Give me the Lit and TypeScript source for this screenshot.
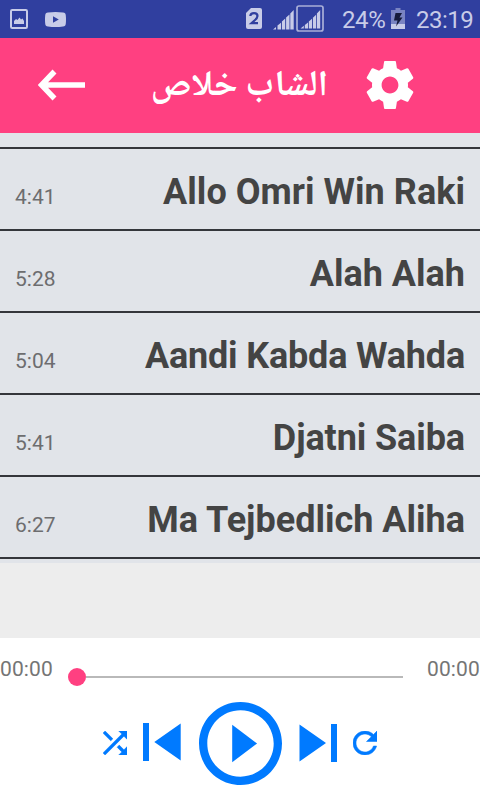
import { LitElement, html, css, svg } from "lit";
import { customElement, property } from "lit/decorators.js";
import { styleMap } from "lit/directives/style-map.js";

interface Track {
  title: string;
  time: string;
  tracking: number;
}

const TRACKS: Track[] = [
  { title: "Allo Omri Win Raki", time: "4:41", tracking: 0.03 },
  { title: "Alah Alah", time: "5:28", tracking: 0 },
  { title: "Aandi Kabda Wahda", time: "5:04", tracking: -0.18 },
  { title: "Djatni Saiba", time: "5:41", tracking: -0.1 },
  { title: "Ma Tejbedlich Aliha", time: "6:27", tracking: 0 },
];

const signalBars = svg`
  <path d="M0 20.5 L3 18 V20.5Z M4.5 16.5 L8 13.7 V20.5 H4.5Z M8.9 12.5 L12.2 9.5 V20.5 H8.9Z M13.1 8.5 L16.5 5.5 V20.5 H13.1Z M17.3 4.5 L20.7 1 V20.5 H17.3Z"/>`;

const smallSignalBars = svg`
  <path d="M0 20 L3.300 17.300 V20Z M4.300 16.500 L7.500 14 V20 H4.300Z M8.300 13 L11.500 10.200 V20 H8.300Z M12.400 9.200 L15.600 6.300 V20 H12.400Z M16.400 5 L19.700 1.500 V20 H16.400Z"/>`;

@customElement("status-bar")
class StatusBar extends LitElement {
  static styles = css`
    :host {
      display: flex;
      align-items: center;
      height: 38px;
      background: #303f9f;
      color: #c8cce8;
      font: 24px/38px Roboto, sans-serif;
    }
    svg { display: block; flex: none; fill: #c8cce8; }
    .picture { margin-left: 10px; }
    .video { margin-left: 17px; }
    .sim { margin-left: auto; margin-top: -1px; }
    .signal { margin-left: 11px; }
    .boxed { margin-left: 2px; margin-top: -1px; }
    .percent { margin-left: 18px; width: 43px; letter-spacing: -0.4px; }
    .battery { margin-left: 6px; margin-top: -1px; }
    .clock { margin-left: 11px; width: 64px; letter-spacing: -0.5px; }
    .percent, .clock { white-space: nowrap; padding-top: 2px; height: 36px; line-height: 36px; }
  `;

  render() {
    return html`
      <svg class="picture" width="18" height="20" viewBox="0 0 18 20">
        <rect x="1" y="1" width="16" height="18" rx="1.2" fill="none" stroke="#c8cce8" stroke-width="2" />
        <path d="M4 15V12L6 10l1.500 1L9.500 8.500l1.500 2 1.500-1 1.500 2.500V15Z" />
      </svg>
      <svg class="video" width="21" height="15" viewBox="0 0 21 15">
        <path fill-rule="evenodd" d="M3 .5Q10.500-.5 18 .5 20.700.700 20.800 3.500Q21.200 7.500 20.800 11.500 20.700 14.300 18 14.500 10.500 15.500 3 14.500.300 14.300.200 11.500-.200 7.500.200 3.500.300.700 3 .5ZM8 4.200V10.800L13.800 7.500Z" />
      </svg>
      <svg class="sim" width="16" height="21" viewBox="0 0 16 21">
        <path d="M5 0H14Q16 0 16 2V19Q16 21 14 21H2Q0 21 0 19V5Z" />
        <path d="M4.300 8Q4.500 5.200 8 5.200T11.500 8Q11.500 10 8.500 12.500L5.500 15.200H12" fill="none" stroke="#303f9f" stroke-width="2.200" />
      </svg>
      <svg class="signal" width="21" height="21" viewBox="0 0 21 21">${signalBars}</svg>
      <svg class="boxed" width="28" height="27" viewBox="0 0 28 27">
        <rect x="1" y="1" width="26" height="25" rx="2" fill="none" stroke="#a9afd8" stroke-width="1.700" />
        <g transform="translate(4.500 3.500)">${smallSignalBars}</g>
      </svg>
      <span class="percent">24%</span>
      <svg class="battery" width="14" height="21" viewBox="0 0 14 21">
        <path d="M4.500 0H9.500V2H14V16H0V2H4.500Z" fill="#7a84c2" />
        <path d="M0 16H14V21H0Z" />
        <path d="M4.500 5H11L8.500 9.500H11.500L5 18.500 6.500 12.500H3Z" fill="#151a3a" />
      </svg>
      <span class="clock">23:19</span>
    `;
  }
}

@customElement("title-bar")
class TitleBar extends LitElement {
  static styles = css`
    :host {
      display: flex;
      align-items: center;
      height: 95px;
      background: #ff4081;
      color: #fff;
    }
    svg { display: block; flex: none; }
    .back { margin: -1px 0 0 38px; }
    .gear { margin-top: -1px; }
    .name {
      margin: 0 38px 0 67px;
      padding-top: 4px;
      width: 176px;
      text-align: center;
      white-space: nowrap;
      font: bold 36px/48px "Noto Naskh Arabic", "Noto Sans Arabic", "DejaVu Sans", sans-serif;
    }
  `;

  render() {
    return html`
      <svg class="back" width="47" height="32" viewBox="0 0 47 32">
        <path d="M16.500 2.500L3.500 16 16.500 29.500M4 16H47" fill="none" stroke="#fff" stroke-width="5.500" />
      </svg>
      <span class="name" dir="rtl" lang="ar">الشاب خلاص</span>
      <svg class="gear" width="48" height="48" viewBox="2 2 20 20">
        <path fill="#fff" d="M19.430 12.980c.04-.32.07-.64.07-.98s-.03-.66-.07-.98l2.110-1.650c.19-.15.24-.42.12-.64l-2-3.460c-.12-.22-.39-.3-.61-.22l-2.490 1c-.52-.4-1.080-.73-1.690-.98l-.38-2.650C14.460 2.180 14.250 2 14 2h-4c-.25 0-.46.18-.49.42l-.38 2.650c-.61.25-1.170.59-1.690.98l-2.490-1c-.23-.09-.49 0-.61.22l-2 3.460c-.13.22-.07.49.12.64l2.110 1.650c-.04.32-.07.65-.07.98s.03.66.07.98l-2.110 1.650c-.19.15-.24.42-.12.64l2 3.460c.12.22.39.3.61.22l2.490-1c.52.4 1.080.73 1.690.98l.38 2.650c.03.24.24.42.49.42h4c.25 0 .46-.18.49-.42l.38-2.650c.61-.25 1.170-.59 1.690-.98l2.490 1c.23.09.49 0 .61-.22l2-3.460c.12-.22.07-.49-.12-.64l-2.110-1.650zM12 15.500c-1.930 0-3.500-1.570-3.500-3.500s1.570-3.500 3.500-3.500 3.500 1.570 3.500 3.500-1.570 3.500-3.500 3.500z" />
      </svg>
    `;
  }
}

@customElement("track-list")
class TrackList extends LitElement {
  @property({ attribute: false }) tracks: Track[] = [];

  static styles = css`
    :host {
      display: block;
      box-sizing: border-box;
      height: 430px;
      padding-top: 14px;
      background: #e1e4e9;
      font-family: Roboto, sans-serif;
    }
    .rows { border-top: 2px solid #34363b; }
    .row {
      display: flex;
      justify-content: space-between;
      align-items: baseline;
      box-sizing: border-box;
      height: 82px;
      padding: 22px 15px 0;
      border-bottom: 2px solid #34363b;
    }
    .time { font-size: 21px; color: #6d6d6f; }
    .title { font-size: 36px; line-height: 42px; font-weight: 700; color: #444; white-space: nowrap; }
  `;

  render() {
    return html`<div class="rows">
      ${this.tracks.map(
        (t) => html`<div class="row">
          <span class="time">${t.time}</span>
          <span class="title" style=${styleMap({ letterSpacing: `${t.tracking}px` })}>${t.title}</span>
        </div>`
      )}
    </div>`;
  }
}

@customElement("player-panel")
class PlayerPanel extends LitElement {
  static styles = css`
    :host {
      display: block;
      height: 162px;
      background: #fff;
      font: 21px/25px Roboto, sans-serif;
      color: #757575;
    }
    .progress { display: flex; height: 64px; }
    .progress span { width: 53px; margin-top: 19px; white-space: nowrap; letter-spacing: 0.1px; }
    .seek { display: flex; align-items: center; width: 335px; height: 18px; margin: 30px 24px 0 15px; }
    .thumb { width: 18px; height: 18px; border-radius: 50%; background: #ff4081; }
    .line { flex: 1; height: 2px; background: #b9b9b9; }
    .controls { display: flex; align-items: center; height: 83px; padding-left: 103px; }
    svg { display: block; flex: none; fill: #007aff; }
    .shuffle, .repeat { stroke: #007aff; stroke-width: 0.35; }
    .shuffle { margin-top: -1px; }
    .prev { margin: -3px 0 0 16px; }
    .play { margin-left: 18px; }
    .next { margin: -1px 0 0 17px; }
    .repeat { margin: -1px 0 0 16px; }
  `;

  render() {
    return html`
      <div class="progress">
        <span>00:00</span>
        <div class="seek"><div class="thumb"></div><div class="line"></div></div>
        <span>00:00</span>
      </div>
      <div class="controls">
        <svg class="shuffle" width="24" height="24" viewBox="4 4 16 16">
          <path d="M10.590 9.170L5.410 4 4 5.410l5.170 5.170 1.420-1.410zM14.500 4l2.040 2.040L4 18.590 5.410 20 17.960 7.460 20 9.500V4h-5.500zm.33 9.410l-1.410 1.410 3.130 3.130L14.500 20H20v-5.500l-2.040 2.040-3.130-3.130z" />
        </svg>
        <svg class="prev" width="38" height="38" viewBox="0 0 38 38">
          <path d="M0 0H6V38H0ZM37.700 .5V37.500L11.300 19Z" />
        </svg>
        <svg class="play" width="83" height="83" viewBox="2 2 20 20">
          <path d="M10 16.500l6-4.500-6-4.500v9zM12 2C6.480 2 2 6.480 2 12s4.480 10 10 10 10-4.480 10-10S17.520 2 12 2zm0 18c-4.410 0-8-3.590-8-8s3.590-8 8-8 8 3.590 8 8-3.590 8-8 8z" />
        </svg>
        <svg class="next" width="38" height="38" viewBox="0 0 38 38">
          <path d="M32 0H38V38H32ZM.500 .5V37.500L27 19Z" />
        </svg>
        <svg class="repeat" width="24" height="24" viewBox="4 4 16 16">
          <path d="M17.650 6.350C16.200 4.900 14.210 4 12 4c-4.420 0-7.990 3.580-7.990 8s3.570 8 7.990 8c3.730 0 6.840-2.550 7.730-6h-2.080c-.82 2.330-3.040 4-5.650 4-3.310 0-6-2.690-6-6s2.690-6 6-6c1.660 0 3.140.69 4.220 1.780L13 11h7V4l-2.350 2.350z" />
        </svg>
      </div>
    `;
  }
}

@customElement("app-root")
class AppRoot extends LitElement {
  static styles = css`
    :host {
      display: flex;
      flex-direction: column;
      width: 480px;
      height: 800px;
      overflow: hidden;
      background: #ededed;
    }
    player-panel { margin-top: auto; }
  `;

  render() {
    return html`
      <status-bar></status-bar>
      <title-bar></title-bar>
      <track-list .tracks=${TRACKS}></track-list>
      <player-panel></player-panel>
    `;
  }
}
